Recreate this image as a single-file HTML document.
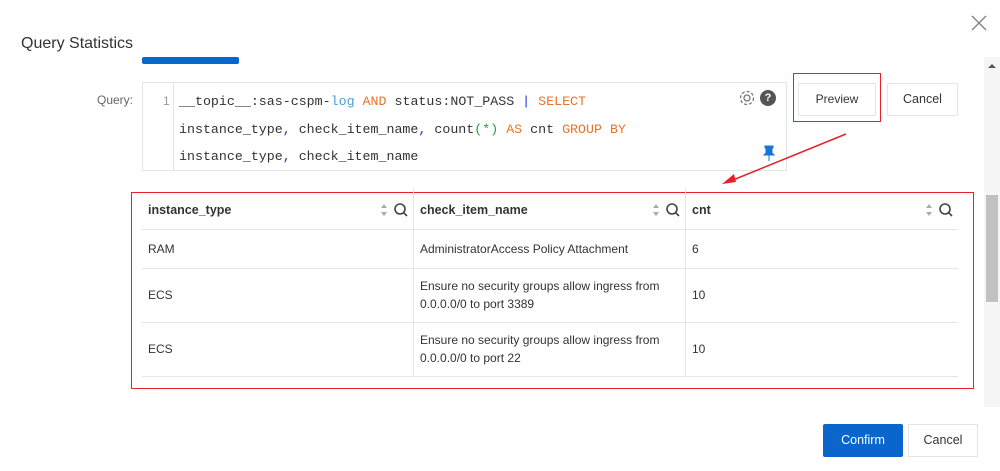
<!DOCTYPE html>
<html><head><meta charset="utf-8"><style>
*{margin:0;padding:0;box-sizing:border-box}
body{width:1000px;height:471px;background:#fff;position:relative;overflow:hidden;font-family:"Liberation Sans",sans-serif;color:#333}
.a{position:absolute}
.mono{font-family:"Liberation Mono",monospace;font-size:13.3px;color:#333}
.kw{color:#e8742c}.bl{color:#4a9fd8}.cm{color:#2233cc}.gr{color:#2a9d3a}
.th{font-size:12.5px;font-weight:bold;color:#333}
.td{font-size:12px;color:#333;line-height:18px}
.hl{position:absolute;height:1px;background:#e3e6ea}
.vl{position:absolute;width:1px;background:#e3e6ea}
</style></head><body>
<svg class="a" style="left:970px;top:14px" width="18" height="18"><path d="M2 2L16 16M16 2L2 16" stroke="#888" stroke-width="1.5"/></svg>
<div class="a" style="left:21px;top:35px;font-size:16px;color:#333">Query Statistics</div>
<div class="a" style="left:142px;top:57px;width:97px;height:7px;background:#0a66cc;border-radius:2px"></div>
<div class="a" style="left:97px;top:93px;font-size:12px;color:#666">Query:</div>
<div class="a" style="left:142px;top:82px;width:645px;height:89px;border:1px solid #e5e5e5"></div>
<div class="a" style="left:173px;top:83px;width:1px;height:87px;background:#e5e5e5"></div>
<div class="a" style="left:163px;top:94px;font-size:12px;color:#999">1</div>
<div class="a mono" style="left:179px;top:94px">__topic__:sas-cspm-<span class="bl">log</span> <span class="kw">AND</span> status:NOT_PASS <span class="cm">|</span> <span class="kw">SELECT</span></div>
<div class="a mono" style="left:179px;top:122px">instance_type<span class="cm">,</span> check_item_name<span class="cm">,</span> count<span class="gr">(*)</span> <span class="kw">AS</span> cnt <span class="kw">GROUP BY</span></div>
<div class="a mono" style="left:179px;top:149px">instance_type<span class="cm">,</span> check_item_name</div>
<svg class="a" style="left:738px;top:89px" width="18" height="18" viewBox="0 0 18 18"><circle cx="9" cy="9" r="3" fill="none" stroke="#777" stroke-width="1.3"/><circle cx="9" cy="9" r="6.5" fill="none" stroke="#777" stroke-width="1.3" stroke-dasharray="3 2"/></svg>
<div class="a" style="left:760px;top:90px;width:16px;height:16px;border-radius:50%;background:#555;color:#fff;font-size:11px;font-weight:bold;text-align:center;line-height:16px">?</div>
<svg class="a" style="left:763px;top:145px" width="12" height="16"><path d="M2 1h8v2h-1v5l2 2H1l2-2V3H2z M6 10v6" fill="#1a73d9" stroke="#1a73d9" stroke-width="1"/></svg>
<div class="a" style="left:793px;top:73px;width:88px;height:49px;border:1.5px solid #e8202a"></div>
<div class="a" style="left:798px;top:83px;width:78px;height:33px;border:1px solid #e5e5e5;font-size:12px;text-align:center;line-height:31px">Preview</div>
<div class="a" style="left:887px;top:83px;width:71px;height:33px;border:1px solid #e5e5e5;font-size:12.5px;text-align:center;line-height:31px">Cancel</div>
<svg class="a" style="left:0;top:0" width="1000" height="471"><path d="M846 134L728 182" stroke="#e8202a" stroke-width="1.5"/><path d="M722 184L734 174L736 182Z" fill="#e8202a"/></svg>
<div class="a" style="left:131px;top:192px;width:843px;height:197px;border:1.5px solid #e8202a"></div>
<div class="hl" style="left:142px;top:229px;width:816px"></div>
<div class="hl" style="left:142px;top:268px;width:816px"></div>
<div class="hl" style="left:142px;top:322px;width:816px"></div>
<div class="hl" style="left:142px;top:376px;width:816px"></div>
<div class="vl" style="left:413px;top:188px;height:188px"></div>
<div class="vl" style="left:685px;top:188px;height:188px"></div>
<div class="a th" style="left:148px;top:203px">instance_type</div>
<div class="a th" style="left:420px;top:203px">check_item_name</div>
<div class="a th" style="left:692px;top:203px">cnt</div>
<svg class="a" style="left:378px;top:202px" width="32" height="16"><path d="M3 6l3-4 3 4zM3 10l3 4 3-4z" fill="#aaa"/><circle cx="22" cy="7" r="5" fill="none" stroke="#444" stroke-width="1.6"/><path d="M25.5 10.5L29 14" stroke="#444" stroke-width="1.6"/></svg>
<svg class="a" style="left:650px;top:202px" width="32" height="16"><path d="M3 6l3-4 3 4zM3 10l3 4 3-4z" fill="#aaa"/><circle cx="22" cy="7" r="5" fill="none" stroke="#444" stroke-width="1.6"/><path d="M25.5 10.5L29 14" stroke="#444" stroke-width="1.6"/></svg>
<svg class="a" style="left:923px;top:202px" width="32" height="16"><path d="M3 6l3-4 3 4zM3 10l3 4 3-4z" fill="#aaa"/><circle cx="22" cy="7" r="5" fill="none" stroke="#444" stroke-width="1.6"/><path d="M25.5 10.5L29 14" stroke="#444" stroke-width="1.6"/></svg>
<div class="a td" style="left:148px;top:240px">RAM</div>
<div class="a td" style="left:420px;top:240px">AdministratorAccess Policy Attachment</div>
<div class="a td" style="left:692px;top:240px">6</div>
<div class="a td" style="left:148px;top:286px">ECS</div>
<div class="a td" style="left:420px;top:277px">Ensure no security groups allow ingress from<br>0.0.0.0/0 to port 3389</div>
<div class="a td" style="left:692px;top:286px">10</div>
<div class="a td" style="left:148px;top:340px">ECS</div>
<div class="a td" style="left:420px;top:331px">Ensure no security groups allow ingress from<br>0.0.0.0/0 to port 22</div>
<div class="a td" style="left:692px;top:340px">10</div>
<div class="a" style="left:984px;top:57px;width:16px;height:350px;background:#f5f5f5"></div>
<svg class="a" style="left:988px;top:63px" width="8" height="6"><path d="M0 5L4 1L8 5Z" fill="#555"/></svg>
<div class="a" style="left:986px;top:195px;width:12px;height:107px;background:#c1c1c1"></div>
<div class="a" style="left:823px;top:424px;width:80px;height:33px;background:#0a66cc;border-radius:2px;color:#fff;font-size:12.5px;text-align:center;line-height:33px">Confirm</div>
<div class="a" style="left:908px;top:424px;width:70px;height:33px;border:1px solid #e5e5e5;font-size:12.5px;text-align:center;line-height:31px">Cancel</div>
</body></html>
